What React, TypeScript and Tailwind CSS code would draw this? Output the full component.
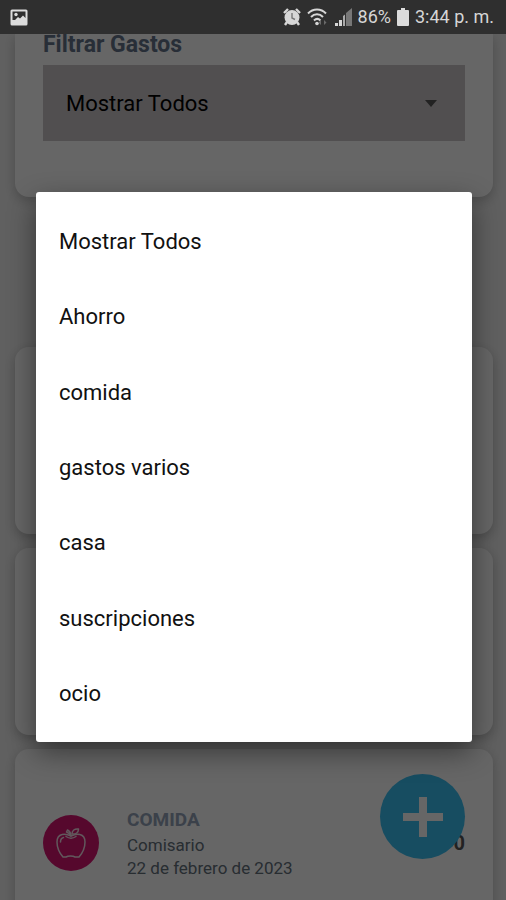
import type { ReactNode } from "react";

const opciones = [
    "Mostrar Todos",
    "Ahorro",
    "comida",
    "gastos varios",
    "casa",
    "suscripciones",
    "ocio",
];

function StatusBar() {
    return (
        <header className="z-30 flex h-[34px] shrink-0 items-center bg-[#2f2f2f] pr-3 pl-2.5 text-[#d6d6d6]">
            <svg width="18" height="17" viewBox="0 0 18 17" aria-hidden="true">
                <rect x="0.5" y="0.5" width="17" height="16" rx="1.5" fill="#dcdcdc" />
                <path d="M2.5 2.5h13v6.500l-2.500-2.500-3 3-2-1.500-3 3h-2.500z" fill="#2f2f2f" />
                <circle cx="6" cy="5.5" r="1.7" fill="#dcdcdc" />
            </svg>

            <div className="ml-auto flex items-center gap-1.5">
                <svg width="18" height="18" viewBox="0 0 18 18" aria-hidden="true">
                    <path d="M1 5l4-4M17 5l-4-4M4 14l-2 3M14 14l2 3" stroke="#d6d6d6" strokeWidth="2.4" />
                    <circle cx="9" cy="9.5" r="7.5" fill="#d6d6d6" />
                    <path d="M9 5v5l3 1.5" fill="none" stroke="#777" strokeWidth="1.4" />
                </svg>
                <svg width="21" height="18" viewBox="0 0 21 18" fill="none" aria-hidden="true">
                    <path
                        d="M1 5.5c5-5.3 13-5.3 18 0M4 9c3.5-3.7 8.500-3.7 12 0M7 12.500c2-2 4.500-2 6.500 0"
                        stroke="#d6d6d6"
                        strokeWidth="2"
                    />
                    <circle cx="10" cy="15.5" r="1.8" fill="#d6d6d6" />
                    <path d="M14 12v5l-2.500-2.500zM17 12v5l2.500-2.500z" fill="#6a6a6a" />
                </svg>
                <svg width="18" height="18" viewBox="0 0 18 18" aria-hidden="true">
                    <path d="M1 15h3v3H1zM5 12h3v6H5z" fill="#d6d6d6" />
                    <path d="M9 8l2-1.500V18H9z" fill="#aaa" />
                    <path d="M12 5l6-5v18h-6z" fill="#777" />
                </svg>
                <span className="text-[18px] leading-6">86%</span>
                <svg width="12" height="18" viewBox="0 0 12 18" aria-hidden="true">
                    <path d="M4 0h4v2h3q1 0 1 1v14q0 1-1 1H1q-1 0-1-1V3q0-1 1-1h3z" fill="#dcdcdc" />
                </svg>
                <span className="text-[18px] leading-6">3:44 p. m.</span>
            </div>
        </header>
    );
}

function Card({ children }: { children?: ReactNode }) {
    return (
        <article className="flex min-h-[187px] shrink-0 items-center rounded-[14px] bg-white px-7 shadow-[0_4px_12px_rgba(0,0,0,0.22)]">
            {children}
        </article>
    );
}

function AppleIcon() {
    return (
        <svg
            width="30"
            height="32"
            viewBox="0 0 30 32"
            fill="none"
            stroke="#f3dbe6"
            strokeWidth="1.5"
            strokeLinecap="round"
            strokeLinejoin="round"
            aria-hidden="true"
        >
            <path d="M15 9C12 7.500 9 6.500 6 7.500 2.500 8.500 1 11.500 1 15c0 5 2.500 11 6 15h3c2-1.200 7-1.200 9 0h4c3.500-4 6-10 6-15 0-3.500-1.500-6.500-5-7.500-3-1-6 0-9 1.500z" />
            <path d="M10 9.500c3 2 7 2 10 0" />
            <path d="M15 9c0-2.500-1-4.500-3.500-6l-1 2c2 .5 3 1.500 4.500 4" />
            <path d="M16 7c0-3.500 2.500-5.500 6.500-5 0 3.500-2.500 5.500-6.500 5z" />
            <path d="M4.500 15c0-2.500 1-4 3-4.500" />
        </svg>
    );
}

export default function App() {
    return (
        <div className="flex h-screen flex-col overflow-hidden font-[Roboto,sans-serif]">
            <StatusBar />

            <div className="relative min-h-0 flex-1">
                <main className="h-full bg-[#f0f0f0] pr-[13px] pl-[15px]">
                    <section className="rounded-b-[14px] bg-white px-7 pb-14 shadow-[0_4px_12px_rgba(0,0,0,0.22)]">
                        <label htmlFor="filtro" className="block h-[31px] text-[23px] leading-[22px] font-bold text-[#64748b]">
                            Filtrar Gastos
                        </label>
                        <div className="relative">
                            <select
                                id="filtro"
                                className="block h-[76px] w-full appearance-none bg-[#cbc6c8] px-[23px] text-[22px] text-black"
                            >
                                {opciones.map((opcion) => (
                                    <option key={opcion}>{opcion}</option>
                                ))}
                            </select>
                            <svg
                                width="12"
                                height="7"
                                viewBox="0 0 12 7"
                                className="pointer-events-none absolute top-[35px] right-7"
                                aria-hidden="true"
                            >
                                <path d="M0 0h12L6 7z" fill="#555" />
                            </svg>
                        </div>
                    </section>

                    <div className="mt-[150px] flex flex-col gap-3.5">
                        <Card />
                        <Card />
                        <Card>
                            <div className="flex size-14 shrink-0 items-center justify-center rounded-full bg-[#d81472]">
                                <AppleIcon />
                            </div>
                            <div className="ml-7 flex-1">
                                <h2 className="text-[19px] leading-7 font-bold text-[#94a3b8]">COMIDA</h2>
                                <p className="text-[17px] leading-[23px] text-[#64707c]">Comisario</p>
                                <p className="text-[17px] leading-[23px] text-[#64707c]">22 de febrero de 2023</p>
                            </div>
                            <p className="text-[20px] leading-6 font-bold text-[#555]">0</p>
                        </Card>
                    </div>
                </main>

                <button
                    type="button"
                    aria-label="Agregar gasto"
                    className="absolute right-[41px] bottom-[41px] flex size-[85px] items-center justify-center rounded-full bg-[#3ac0f3]"
                >
                    <svg width="40" height="40" viewBox="0 0 40 40" aria-hidden="true">
                        <path d="M16 0h8v16h16v8H24v16h-8V24H0v-8h16z" fill="#fff" />
                    </svg>
                </button>

                <div className="absolute inset-0 z-20 flex items-center justify-center bg-black/60 pr-[34px] pl-9">
                    <div
                        role="dialog"
                        aria-label="Filtrar Gastos"
                        className="w-full rounded-[3px] bg-white shadow-[0_10px_28px_rgba(0,0,0,0.45)]"
                    >
                        <ul className="flex min-h-[550px] flex-col pt-3 pb-2.5">
                            {opciones.map((opcion) => (
                                <li key={opcion} className="flex flex-1">
                                    <button type="button" className="w-full px-[23px] text-left text-[22px] leading-7 text-[#111]">
                                        {opcion}
                                    </button>
                                </li>
                            ))}
                        </ul>
                    </div>
                </div>
            </div>
        </div>
    );
}
